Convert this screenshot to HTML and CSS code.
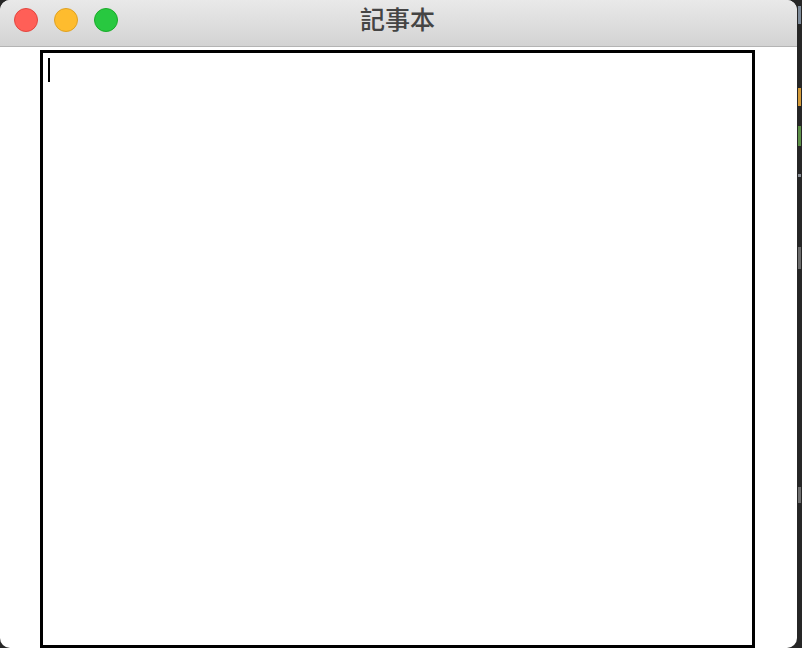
FILE: index.html
```html
<!DOCTYPE html>
<html lang="zh-Hant">
<head>
<meta charset="utf-8">
<title>記事本</title>
<link rel="stylesheet" href="styles.css">
</head>
<body>
<div class="screen">
  <div class="window">
    <div class="titlebar">
      <div class="lights">
        <span class="light red"></span>
        <span class="light yellow"></span>
        <span class="light green"></span>
      </div>
      <div class="title">記事本</div>
    </div>
    <div class="content">
      <div class="editor" contenteditable="true"><span class="caret"></span></div>
    </div>
  </div>
  <div class="strip">
    <span class="bit b1"></span>
    <span class="bit b2"></span>
    <span class="bit b3"></span>
    <span class="bit b4"></span>
    <span class="bit b5"></span>
    <span class="bit b6"></span>
  </div>
</div>
</body>
</html>
```
FILE: styles.css
```css
html, body {
  margin: 0;
  padding: 0;
  background: #262626;
  width: 802px;
  height: 648px;
  overflow: hidden;
}
.screen {
  display: flex;
  width: 802px;
  height: 648px;
}
.window {
  width: 797px;
  height: 648px;
  background: #ffffff;
  border-radius: 10px;
  overflow: hidden;
  display: flex;
  flex-direction: column;
  flex: none;
}
.titlebar {
  height: 46px;
  flex: none;
  background: linear-gradient(#e9e9e9, #d3d3d3);
  border-bottom: 1px solid #b4b4b4;
  position: relative;
  display: flex;
  align-items: center;
}
.lights {
  display: flex;
  gap: 16px;
  padding-left: 14px;
  margin-top: -6px;
}
.light {
  width: 22px;
  height: 22px;
  border-radius: 50%;
  border: 1px solid transparent;
}
.red { background: #ff5f57; border-color: #e2463f; }
.yellow { background: #febc2e; border-color: #dea123; }
.green { background: #28c840; border-color: #1aab29; }
.title {
  position: absolute;
  left: 0;
  right: 0;
  top: 2px;
  text-align: center;
  font-family: "Noto Sans CJK TC", "Noto Sans CJK SC", sans-serif;
  font-size: 25px;
  font-weight: 500;
  line-height: 32px;
  color: #444444;
  padding-right: 2px;
}
.content {
  flex: 1;
  padding: 3px 0 0 40px;
  display: flex;
}
.editor {
  width: 715px;
  height: 598px;
  box-sizing: border-box;
  border: 3px solid #000;
  padding: 5px 5px;
  outline: none;
  font-family: "Liberation Sans", sans-serif;
  font-size: 20px;
  line-height: 24px;
  background: #fff;
  display: flex;
  align-items: flex-start;
}
.caret {
  display: block;
  width: 2px;
  height: 24px;
  background: #000;
}
.strip {
  flex: 1;
  display: flex;
  flex-direction: column;
  background: #262626;
}
.bit { display: block; width: 3px; margin-left: 1px; }
.b1 { height: 18px; margin-top: 6px; background: #7d8a99; }
.b2 { height: 18px; margin-top: 64px; background: #d29a3a; }
.b3 { height: 20px; margin-top: 20px; background: #5d8f48; }
.b4 { height: 3px; margin-top: 28px; background: #8a8f96; }
.b5 { height: 22px; margin-top: 70px; background: #6b6b6b; }
.b6 { height: 16px; margin-top: 218px; background: #6e6e6e; }
```
